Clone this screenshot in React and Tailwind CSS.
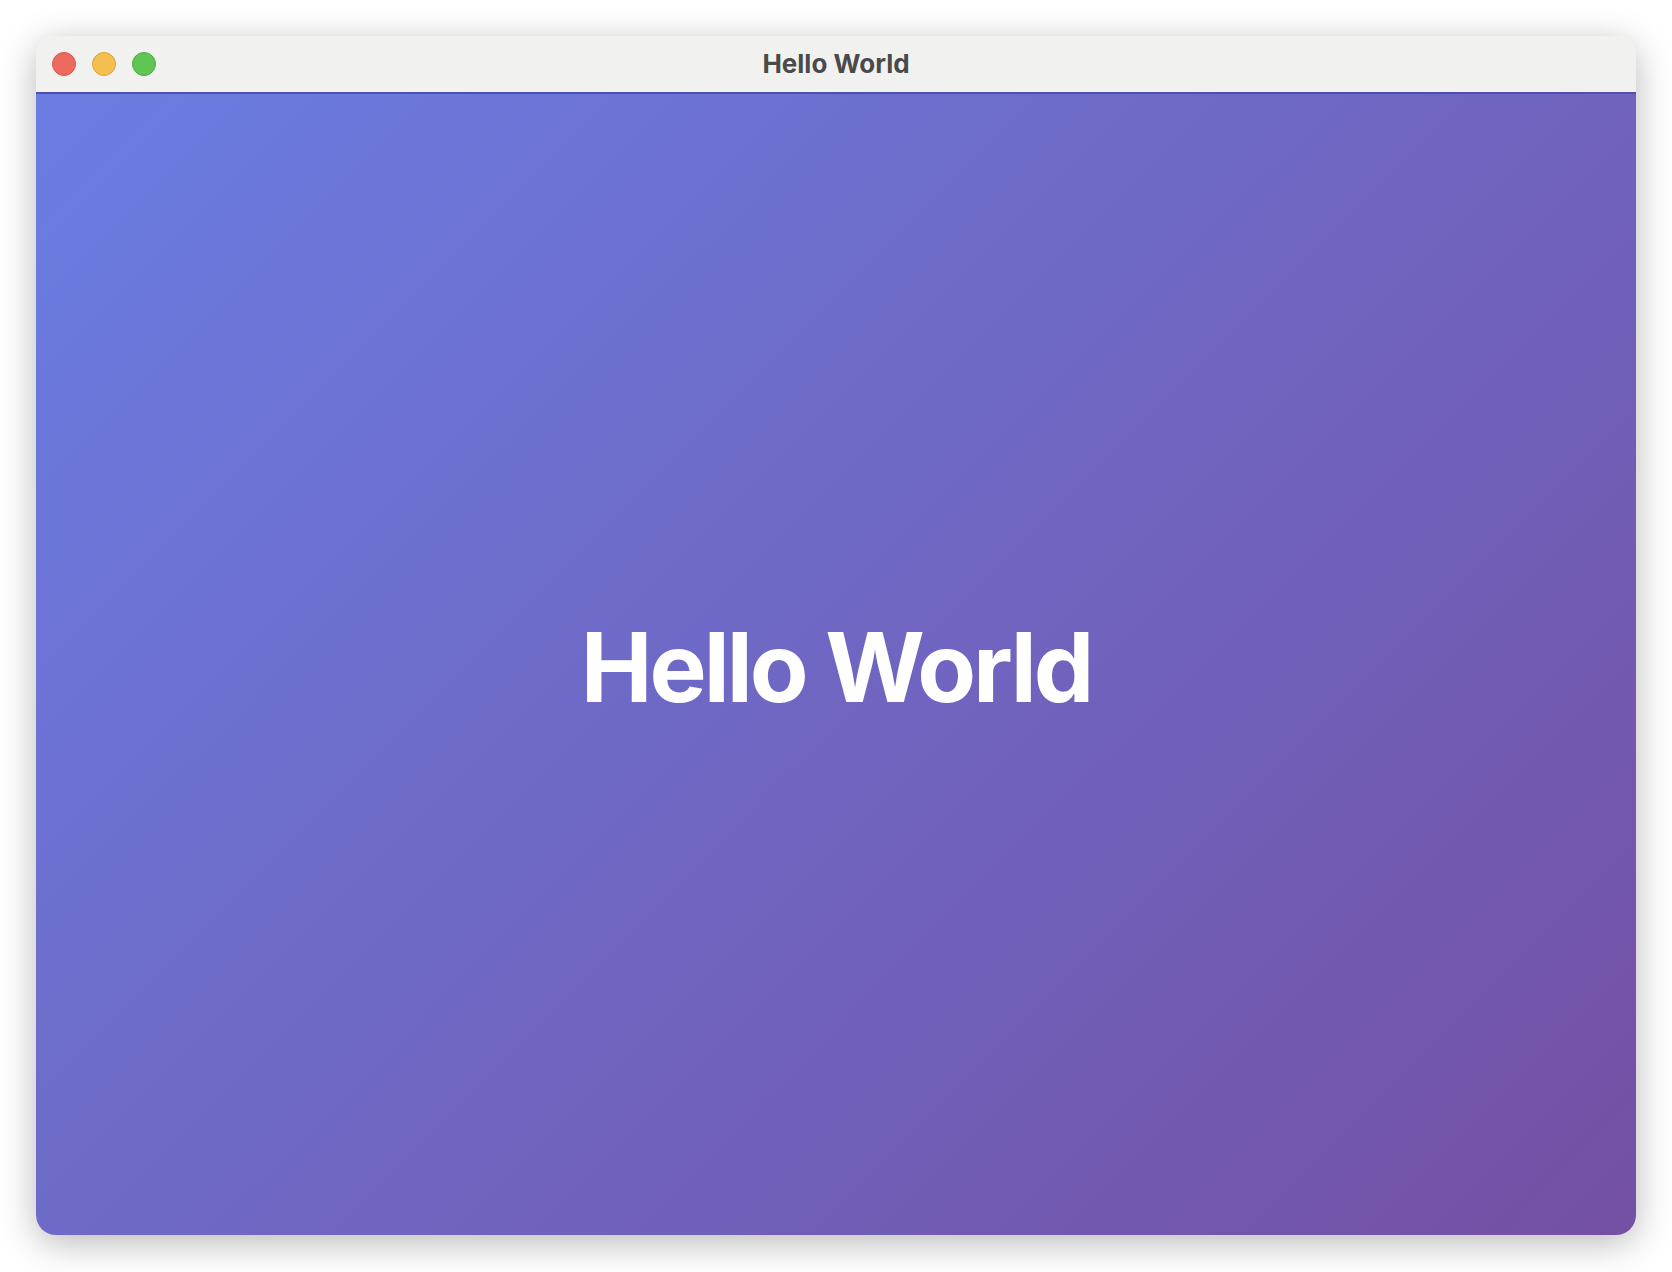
export default function App() {
  return (
    <div className="w-[1672px] h-[1272px] bg-white p-[36px]" style={{ fontFamily: 'Inter, "Liberation Sans", sans-serif' }}>
      <div className="w-[1600px] h-[1199px] rounded-[20px] overflow-hidden flex flex-col shadow-[0_8px_36px_rgba(0,0,0,0.28)]">
        <div className="h-[56px] bg-[#f1f2f0] flex items-center relative shrink-0">
          <div className="flex items-center gap-[16px] pl-[16px]">
            <div className="w-[24px] h-[24px] rounded-full bg-[#ed6a5e] border border-[#d5574c]" />
            <div className="w-[24px] h-[24px] rounded-full bg-[#f5bf4f] border border-[#d9a43c]" />
            <div className="w-[24px] h-[24px] rounded-full bg-[#61c554] border border-[#4fa944]" />
          </div>
          <div className="absolute inset-0 flex items-center justify-center pb-[2px] text-[26px] font-bold text-[#4a4a4a] tracking-[0px]">
            Hello World
          </div>
        </div>
        <div className="h-[2px] bg-[#4e4fb3] shrink-0" />
        <div className="flex-1 bg-[linear-gradient(135deg,#6a7de2_0%,#7450a3_100%)] flex items-center justify-center">
          <h1 className="mt-[4px] text-[96px] font-bold text-white tracking-[-3px] leading-none">Hello World</h1>
        </div>
      </div>
    </div>
  );
}
